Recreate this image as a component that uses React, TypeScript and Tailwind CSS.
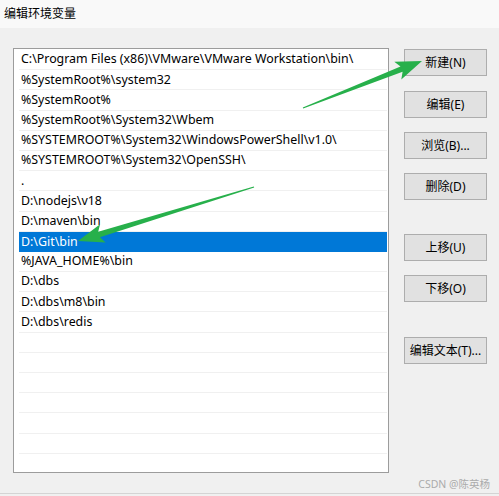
import React from "react";

const rows = [
  "C:\\Program Files (x86)\\VMware\\VMware Workstation\\bin\\",
  "%SystemRoot%\\system32",
  "%SystemRoot%",
  "%SystemRoot%\\System32\\Wbem",
  "%SYSTEMROOT%\\System32\\WindowsPowerShell\\v1.0\\",
  "%SYSTEMROOT%\\System32\\OpenSSH\\",
  ".",
  "D:\\nodejs\\v18",
  "D:\\maven\\bin",
  "D:\\Git\\bin",
  "%JAVA_HOME%\\bin",
  "D:\\dbs",
  "D:\\dbs\\m8\\bin",
  "D:\\dbs\\redis",
  "",
  "",
  "",
  "",
  "",
  "",
  "",
];

type Btn = { label: string; mt: string };
const buttons: Btn[] = [
  { label: "新建(N)", mt: "mt-0" },
  { label: "编辑(E)", mt: "mt-[15px]" },
  { label: "浏览(B)...", mt: "mt-[14px]" },
  { label: "删除(D)", mt: "mt-[14px]" },
  { label: "上移(U)", mt: "mt-[34px]" },
  { label: "下移(O)", mt: "mt-[14px]" },
  { label: "编辑文本(T)...", mt: "mt-[35px]" },
];

function arrowPoints(tx: number, ty: number, hx: number, hy: number) {
  const dx = hx - tx;
  const dy = hy - ty;
  const len = Math.sqrt(dx * dx + dy * dy);
  const ux = dx / len;
  const uy = dy / len;
  const nx = -uy;
  const ny = ux;
  const headLen = 22;
  const bx = hx - ux * headLen;
  const by = hy - uy * headLen;
  const wx = bx - ux * 4;
  const wy = by - uy * 4;
  const pts: [number, number][] = [
    [tx + nx * 0.6, ty + ny * 0.6],
    [bx + nx * 2.9, by + ny * 2.9],
    [wx + nx * 9.5, wy + ny * 9.5],
    [hx, hy],
    [wx - nx * 9.5, wy - ny * 9.5],
    [bx - nx * 2.9, by - ny * 2.9],
    [tx - nx * 0.6, ty - ny * 0.6],
  ];
  return pts.map((p) => `${p[0].toFixed(1)},${p[1].toFixed(1)}`).join(" ");
}

export default function App() {
  return (
    <div
      className="relative w-[499px] h-[496px] overflow-hidden bg-[#f0f0f0] text-black"
      style={{ fontFamily: '"Noto Sans", "Noto Sans CJK SC", sans-serif' }}
    >
      <div className="h-[28px] bg-[#f9f9f9] flex items-center pl-[4px] text-[12px] leading-none">
        编辑环境变量
      </div>
      <div className="flex pt-[20px] pl-[13px]">
        <div className="w-[376px] h-[425px] border border-[#9c9c9c] bg-white pt-[1px] pl-[5px] pr-[1px] overflow-hidden">
          {rows.map((r, i) => (
            <div
              key={i}
              className={
                i === 9
                  ? "h-[20.2px] flex items-center pl-[2px] text-[12.4px] leading-none bg-[#0078d7] text-white"
                  : "h-[20.2px] flex items-center pl-[2px] text-[12.4px] leading-none border-b border-[#f0f0f0]"
              }
            >
              <span className="whitespace-pre">{r}</span>
            </div>
          ))}
        </div>
        <div className="flex flex-col ml-[15px] pt-[1px]">
          {buttons.map((b, i) => (
            <div
              key={i}
              className={`${b.mt} w-[83px] h-[27px] border border-[#adadad] bg-[#e1e1e1] flex items-center justify-center text-[12px] leading-none`}
            >
              {b.label}
            </div>
          ))}
        </div>
      </div>
      <div className="absolute right-[9px] bottom-[7px] text-[10.5px] leading-none text-[#ababab]">
        CSDN @陈英杨
      </div>
      <div className="absolute left-0 right-0 bottom-[2px] h-[1px] bg-[#d4d4d4]" />
      <svg className="absolute inset-0" width="499" height="496" viewBox="0 0 499 496">
        <polygon points={arrowPoints(303, 108, 422, 61)} fill="#27b04b" />
        <polygon points={arrowPoints(254, 187, 78, 241)} fill="#27b04b" />
      </svg>
    </div>
  );
}
